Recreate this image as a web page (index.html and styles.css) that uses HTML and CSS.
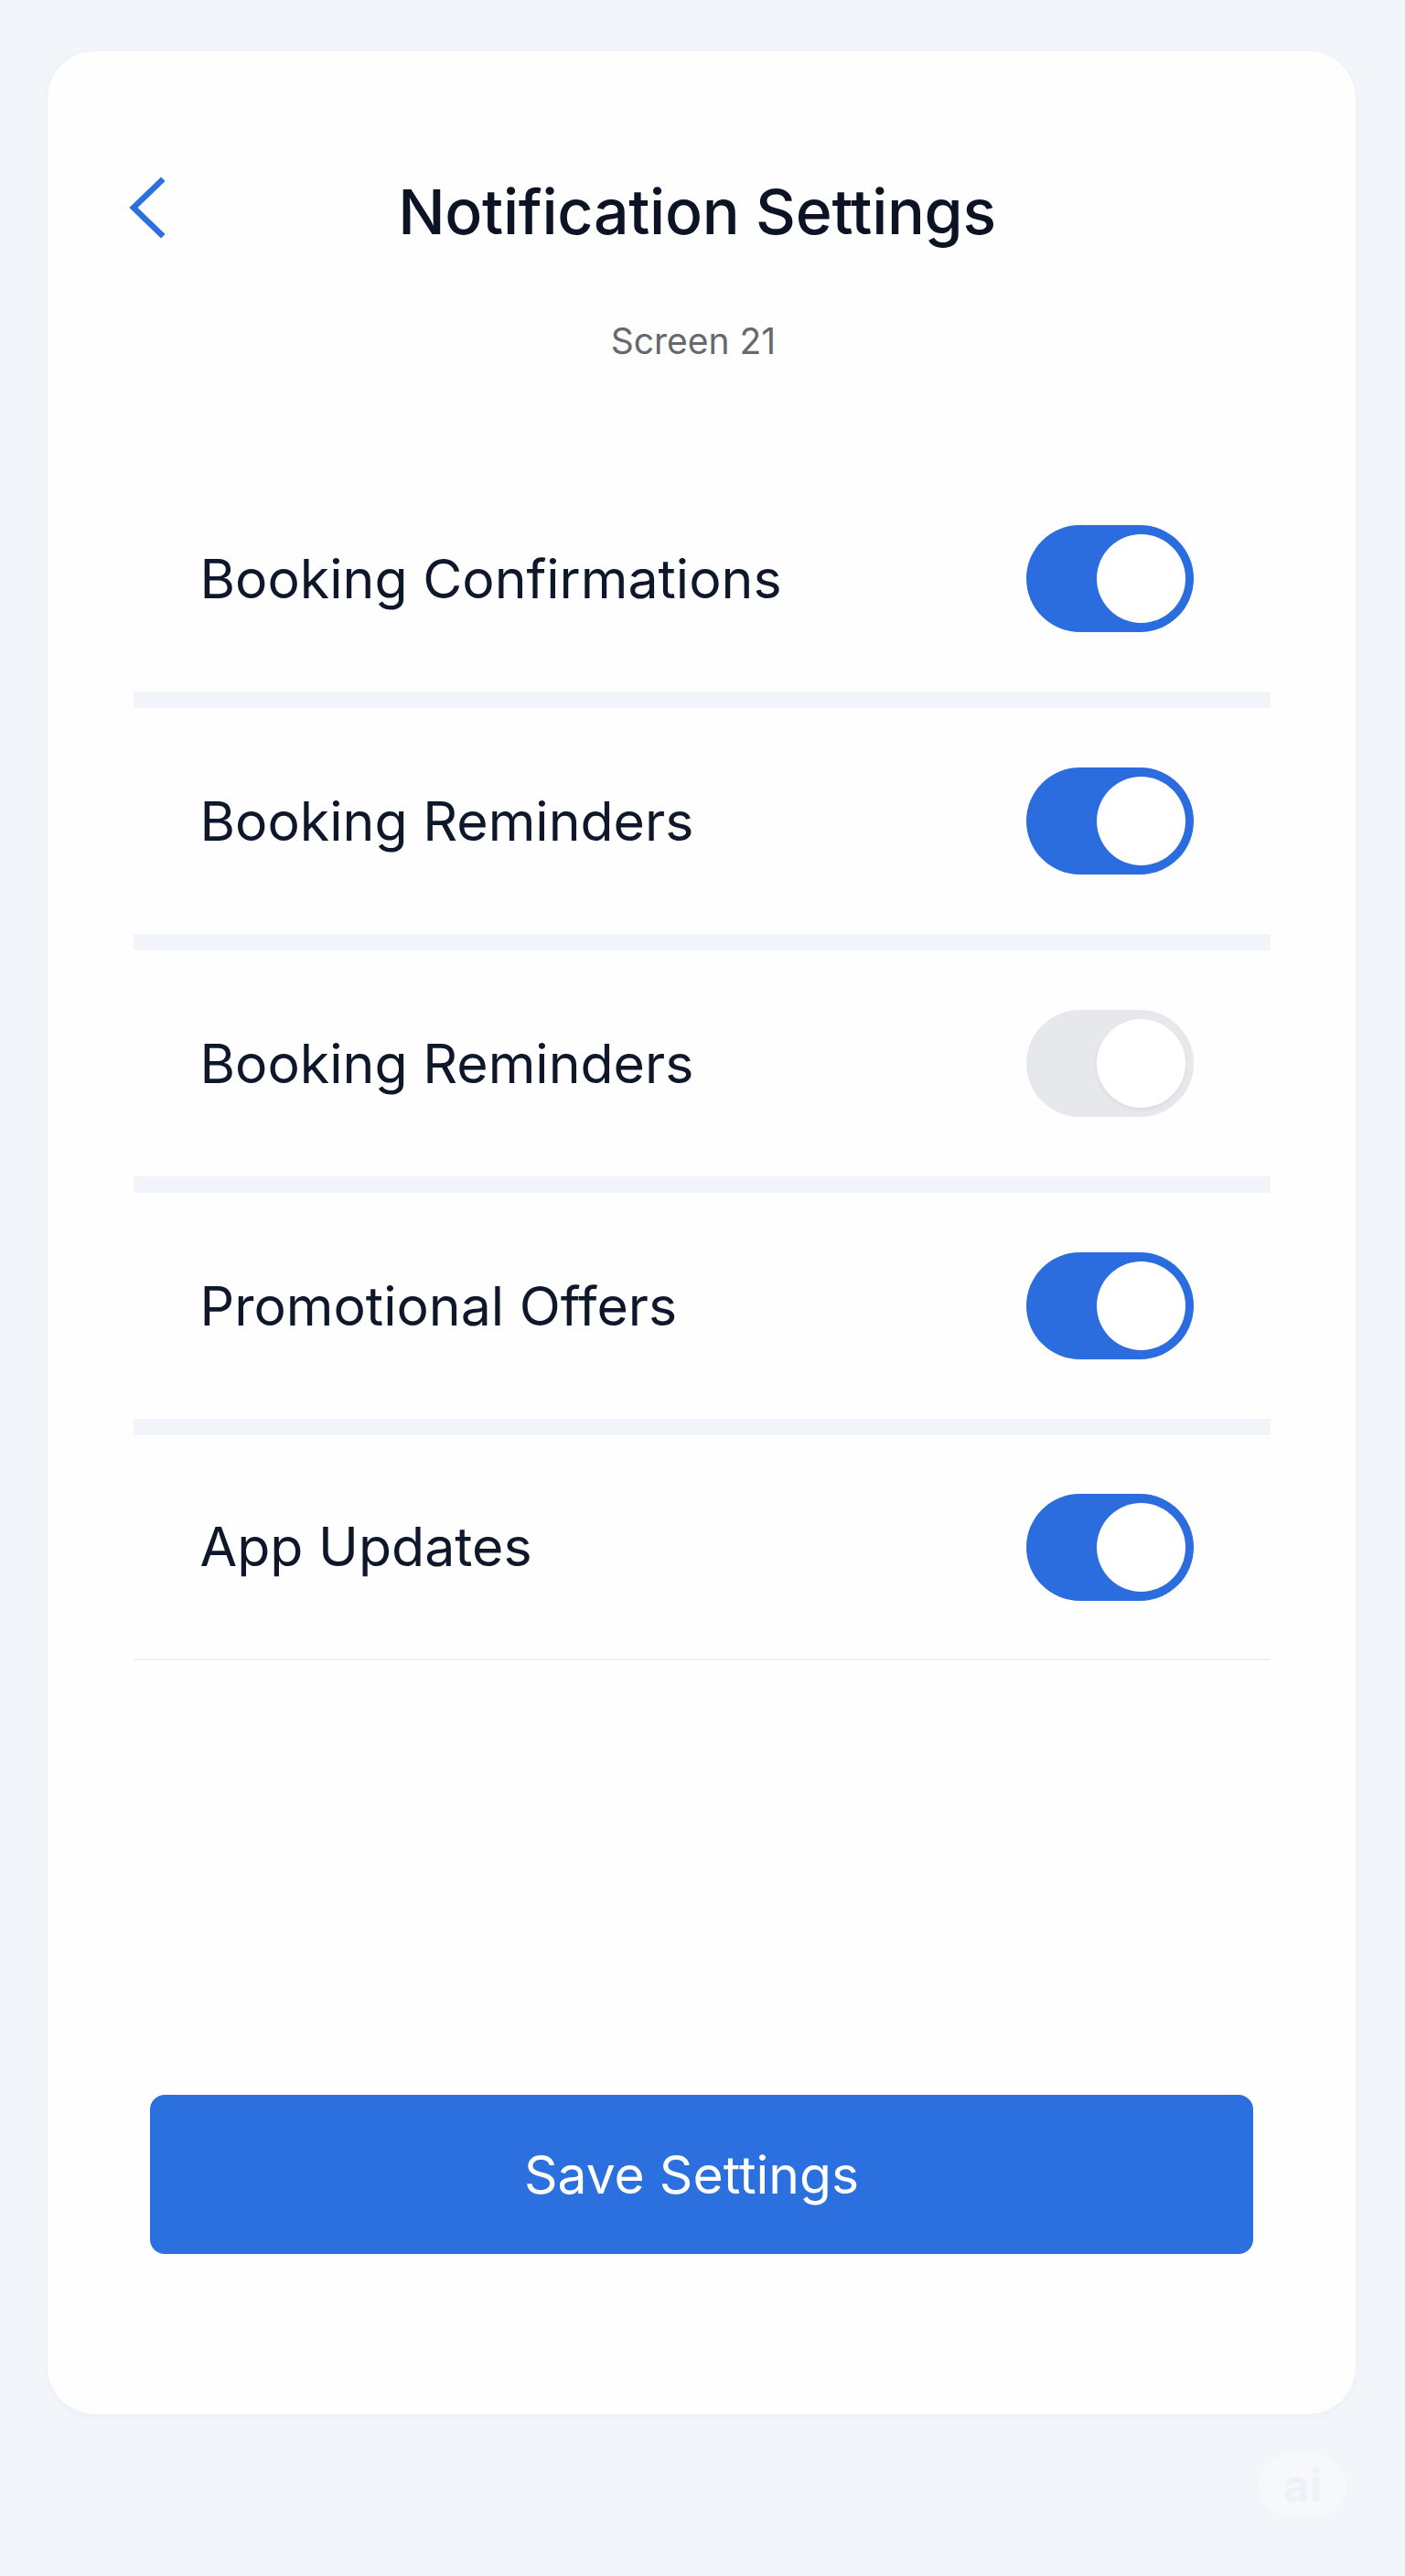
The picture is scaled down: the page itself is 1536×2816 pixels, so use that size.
FILE: index.html
```html
<!DOCTYPE html>
<html lang="en">
<head>
<meta charset="utf-8">
<title>Notification Settings</title>
<link rel="stylesheet" href="styles.css">
</head>
<body>
<div class="page">
  <main class="card">
    <header class="header">
      <button class="back" aria-label="Back">
        <svg width="44" height="70" viewBox="0 0 44 70" fill="none">
          <path d="M36 6 L6 35 L36 64" stroke="#2c6fdf" stroke-width="6.5" stroke-linecap="square" stroke-linejoin="miter"/>
        </svg>
      </button>
      <h1 class="title">Notification Settings</h1>
      <span class="spacer"></span>
    </header>
    <p class="subtitle">Screen 21</p>

    <ul class="list">
      <li class="row"><span class="label">Booking Confirmations</span><span class="toggle on"><span class="knob"></span></span></li>
      <li class="row"><span class="label">Booking Reminders</span><span class="toggle on"><span class="knob"></span></span></li>
      <li class="row"><span class="label">Booking Reminders</span><span class="toggle off"><span class="knob"></span></span></li>
      <li class="row"><span class="label">Promotional Offers</span><span class="toggle on"><span class="knob"></span></span></li>
      <li class="row last"><span class="label">App Updates</span><span class="toggle on"><span class="knob"></span></span></li>
    </ul>

    <button class="save">Save Settings</button>
  </main>
  <div class="ai-badge">ai</div>
</div>
</body>
</html>
```

FILE: styles.css
```css
* { box-sizing: border-box; }

html, body {
  margin: 0;
  padding: 0;
  background: #f2f5f9;
  font-family: Inter, "Noto Sans", "Liberation Sans", sans-serif;
}

.page {
  position: relative;
  width: 1536px;
  height: 2816px;
  padding: 56px 54px 0 52px;
}

.card {
  display: flex;
  flex-direction: column;
  height: 2583px;
  background: #fefeff;
  border-radius: 52px;
  box-shadow: 0 2px 10px rgba(30, 50, 80, 0.03);
  padding-top: 135px;
}

.header {
  display: grid;
  grid-template-columns: 1fr auto 1fr;
  align-items: center;
  padding: 0 98px 0 88px;
  height: 80px;
}

.back {
  justify-self: start;
  display: flex;
  background: none;
  border: 0;
  padding: 0;
  margin-top: -8px;
  cursor: pointer;
}

.title {
  margin: 0;
  font-size: 68px;
  line-height: 80px;
  font-weight: 500;
  color: #0b1324;
  letter-spacing: -0.3px;
  white-space: nowrap;
}

.spacer { display: block; }

.subtitle {
  margin: 79px 0 0;
  text-align: center;
  font-size: 39px;
  line-height: 45px;
  color: #65686d;
  padding-right: 18px;
}

.list {
  list-style: none;
  margin: 114px auto 0;
  padding: 0;
  width: 1243px;
}

.row {
  display: flex;
  align-items: center;
  justify-content: space-between;
  height: 265px;
  padding: 0 84px 0 73px;
  border-bottom: 18px solid #f1f4f8;
}

.row.last {
  height: 246px;
  border-bottom: 2px solid #eef1f5;
}

.label {
  font-size: 59px;
  line-height: 70px;
  color: #0f172a;
  font-weight: 400;
  letter-spacing: 0;
}

.toggle {
  display: flex;
  justify-content: flex-end;
  align-items: center;
  width: 183px;
  height: 117px;
  padding: 10px 9px;
  border-radius: 60px;
}

.toggle.on { background: #2b6cdf; }
.toggle.off { background: #e7e8eb; }

.knob {
  width: 97px;
  height: 97px;
  border-radius: 50%;
  background: #ffffff;
}

.toggle.off .knob {
  box-shadow: 0 2px 4px rgba(0, 0, 0, 0.06);
}

.save {
  margin: auto auto 175px;
  width: 1206px;
  height: 174px;
  border: 0;
  border-radius: 16px;
  background: #2c6fdf;
  color: #ffffff;
  font-family: Inter, "Noto Sans", "Liberation Sans", sans-serif;
  font-size: 57px;
  font-weight: 400;
  letter-spacing: 0;
  padding: 0 22px 0 0;
  cursor: pointer;
}

.ai-badge {
  position: absolute;
  left: 1376px;
  top: 2682px;
  width: 96px;
  height: 70px;
  border-radius: 35px;
  background: #f6f8fb;
  color: #eef1f5;
  font-size: 50px;
  font-weight: 700;
  line-height: 70px;
  text-align: center;
}
```
